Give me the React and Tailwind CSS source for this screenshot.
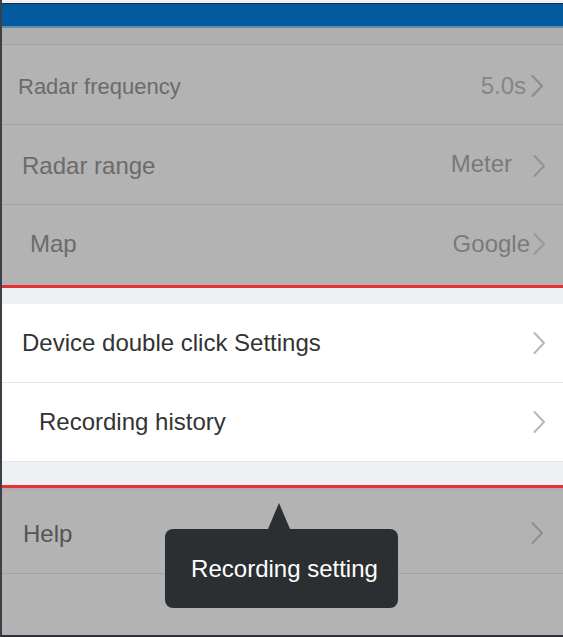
import React from "react";

function Chevron({ className }) {
  return (
    <svg width="14" height="24" viewBox="0 0 14 24" className={className} fill="none">
      <path d="M2.5 2 L12 12 L2.5 22" stroke="currentColor" strokeWidth="2" strokeLinecap="round" strokeLinejoin="round" />
    </svg>
  );
}

export default function App() {
  return (
    <div
      className="relative w-[563px] h-[637px] overflow-hidden bg-[#b3b3b3] border-l-2 border-l-[#3b4048] border-b-2 border-b-[#2f3338] flex flex-col"
      style={{ fontFamily: '"Liberation Sans", Arial, sans-serif' }}
    >
      <div className="h-[3px] bg-[#eef1f8]" />
      <div className="h-[1px] bg-[#1d2a3a]" />
      <div className="h-[22px] bg-[#045a9f]" />
      <div className="h-[2px] bg-[#5f8fa8]" />
      <div className="h-[17px] bg-[#afafaf] border-b border-[#a2a2a2]" />
      <div className="flex items-center justify-between h-[80px] border-b border-[#a3a3a3]">
        <span className="pl-[16px] pt-[3px] text-[22px] text-[#6b6b6b]">Radar frequency</span>
        <div className="flex items-center gap-[4px] pr-[19px] pt-[2px] text-[24px] text-[#858585]">
          <span>5.0s</span>
          <Chevron className="text-[#8c8c8c]" />
        </div>
      </div>
      <div className="flex items-center justify-between h-[80px] border-b border-[#a3a3a3]">
        <span className="pl-[20px] text-[24px] text-[#6b6b6b] pt-[2px]">Radar range</span>
        <div className="flex items-center gap-[20px] pr-[17px] text-[24px] text-[#7a7a7a] pb-[2px]">
          <span>Meter</span>
          <Chevron className="text-[#939393] mt-[4px]" />
        </div>
      </div>
      <div className="flex items-center justify-between h-[78px]">
        <span className="pl-[28px] text-[24px] text-[#6b6b6b]">Map</span>
        <div className="flex items-center gap-[2px] pr-[17px] text-[24px] text-[#7a7a7a]">
          <span>Google</span>
          <Chevron className="text-[#999999]" />
        </div>
      </div>
      <div className="h-[2px] bg-[#b7aebd]" />
      <div className="h-[3px] bg-[#e2342c]" />
      <div className="h-[16px] bg-[#eef0f4]" />
      <div className="flex items-center justify-between h-[79px] bg-white border-b border-[#e6e8ec]">
        <span className="pl-[20px] text-[24px] text-[#333333]">Device double click Settings</span>
        <Chevron className="mr-[17px] text-[#b8b8b8]" />
      </div>
      <div className="flex items-center justify-between h-[78px] bg-white">
        <span className="pl-[37px] text-[24px] text-[#333333]">Recording history</span>
        <Chevron className="mr-[17px] text-[#b8b8b8]" />
      </div>
      <div className="h-[24px] bg-[#eef0f4] border-t border-[#e2e6ea]" />
      <div className="h-[3px] bg-[#e2342c]" />
      <div className="h-[3px] bg-[#b2aab8]" />
      <div className="flex items-center justify-between h-[83px] border-b border-[#a3a3a3]">
        <span className="pl-[21px] pt-[4px] text-[24px] text-[#555555]">Help</span>
        <Chevron className="mr-[19px] mt-[2px] text-[#8f8f8f]" />
      </div>
      <div className="flex-1" />

      <div className="absolute left-[163px] top-[503px] flex flex-col items-center">
        <div className="ml-[-6px] w-0 h-0 border-l-[11px] border-r-[11px] border-b-[26px] border-l-transparent border-r-transparent border-b-[#2b2f32]" />
        <div className="w-[233px] h-[79px] rounded-[8px] bg-[#2b2f32] flex items-center justify-center">
          <span className="pl-[6px] text-[24px] text-white">Recording setting</span>
        </div>
      </div>
    </div>
  );
}
